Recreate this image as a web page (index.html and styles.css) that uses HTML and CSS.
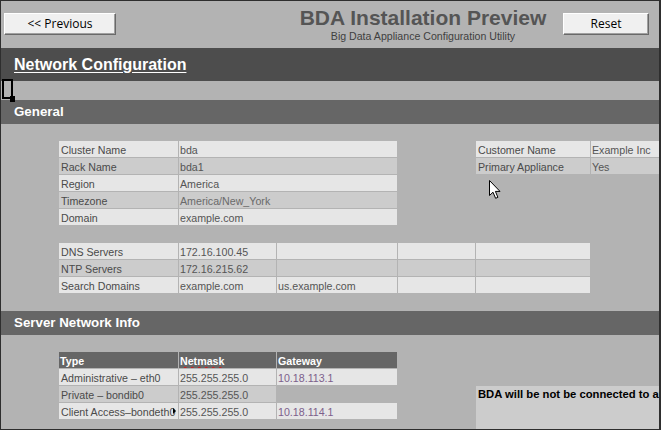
FILE: index.html
```html
<!DOCTYPE html>
<html>
<head>
<meta charset="utf-8">
<title>BDA Installation Preview</title>
<link rel="stylesheet" href="styles.css">
</head>
<body>
<div class="window">
  <header class="topbar">
    <button class="btn prev">&lt;&lt; Previous</button>
    <div class="title-block">
      <div class="title">BDA Installation Preview</div>
      <div class="subtitle">Big Data Appliance Configuration Utility</div>
    </div>
    <button class="btn reset">Reset</button>
  </header>

  <div class="page-band"><span class="page-title">Network Configuration</span></div>
  <div class="blank-row"></div>

  <div class="section-band">General</div>
  <div class="sheet">
    <div class="grid">
      <div class="cell l c1">Cluster Name</div><div class="cell l v c23">bda</div>
      <div class="cell l c5">Customer Name</div><div class="cell l v c6">Example Inc</div>
      <div class="cell d c1">Rack Name</div><div class="cell d v c23">bda1</div>
      <div class="cell d c5">Primary Appliance</div><div class="cell d v c6">Yes</div>
      <div class="cell l c1">Region</div><div class="cell l v c23">America</div>
      <div class="cell d c1">Timezone</div><div class="cell d v2 c23">America/New_York</div>
      <div class="cell l c1">Domain</div><div class="cell l v c23">example.com</div>
    </div>

    <div class="grid dns">
      <div class="cell l c1">DNS Servers</div><div class="cell l v">172.16.100.45</div><div class="cell l"></div><div class="cell l"></div><div class="cell l"></div>
      <div class="cell d c1">NTP Servers</div><div class="cell d v">172.16.215.62</div><div class="cell d"></div><div class="cell d"></div><div class="cell d"></div>
      <div class="cell l c1">Search Domains</div><div class="cell l v">example.com</div><div class="cell l v">us.example.com</div><div class="cell l"></div><div class="cell l"></div>
    </div>
  </div>

  <div class="section-band">Server Network Info</div>
  <div class="sheet">
    <div class="grid">
      <div class="cell h c1">Type</div><div class="cell h"><span class="spell">Netmask</span></div><div class="cell h">Gateway</div>
      <div class="cell l c1">Administrative – eth0</div><div class="cell l v">255.255.255.0</div><div class="cell l gw">10.18.113.1</div>
      <div class="cell d c1">Private – bondib0</div><div class="cell d v">255.255.255.0</div>
      <div class="message">BDA will be not be connected to an existing network</div>
      <div class="cell l c1 marked">Client Access–bondeth0<span class="marker"></span></div><div class="cell l v">255.255.255.0</div><div class="cell l gw">10.18.114.1</div>
    </div>
  </div>

  <svg class="focus" width="14" height="25" viewBox="0 0 14 25">
    <rect x="1" y="1" width="9" height="18" fill="none" stroke="#000" stroke-width="2"/>
    <rect x="8" y="17" width="5" height="6" fill="#000"/>
  </svg>
  <svg class="cursor" width="13" height="20" viewBox="0 0 13 20">
    <path d="M0.5 0.5 L0.5 15.5 L4 12.2 L6.6 18.3 L8.9 17.3 L6.4 11.4 L11 11.4 Z" fill="#fff" stroke="#000" stroke-width="1" stroke-linejoin="miter"/>
  </svg>
</div>
</body>
</html>
```

FILE: styles.css
```css
* { box-sizing: border-box; }
html, body { margin: 0; padding: 0; }
body {
  width: 661px;
  height: 430px;
  overflow: hidden;
  background: #b3b3b3;
  font-family: "Liberation Sans", Arial, sans-serif;
}
.window {
  position: relative;
  width: 661px;
  height: 430px;
  border: 1px solid #2e2e2e;
  border-right-width: 2px;
  overflow: hidden;
  background: #b3b3b3;
  display: flex;
  flex-direction: column;
}
.topbar {
  flex: none;
  height: 47px;
  display: flex;
  align-items: flex-start;
  padding: 0 10px 0 3px;
}
.btn {
  flex: none;
  height: 22px;
  margin: 12px 0 0 0;
  padding: 0;
  background: #f0f0f0;
  border: 1px solid;
  border-color: #ffffff #696969 #696969 #ffffff;
  box-shadow: inset -1px -1px 0 #a0a0a0;
  font: 12px/20px "Open Sans", "Liberation Sans", sans-serif;
  color: #000;
}
.prev { width: 112px; }
.reset { width: 86px; }
.title-block {
  flex: none;
  width: 252px;
  margin: 6px 14px 0 181px;
  text-align: center;
}
.title {
  font: bold 21px/21px "Liberation Sans", Arial, sans-serif;
  color: #555555;
  white-space: nowrap;
}
.subtitle {
  margin-top: 2px;
  font: 10.6px/12px "Liberation Sans", Arial, sans-serif;
  color: #3f3f3f;
  white-space: nowrap;
}
.page-band {
  flex: none;
  height: 33px;
  background: #4d4d4d;
  padding-left: 13px;
  font: bold 16px/33px "Liberation Sans", Arial, sans-serif;
  color: #ffffff;
}
.page-title { text-decoration: underline; text-underline-offset: 2px; }
.blank-row { flex: none; height: 19px; }
.section-band {
  flex: none;
  height: 24px;
  background: #666666;
  padding-left: 13px;
  font: bold 13.33px/24px "Liberation Sans", Arial, sans-serif;
  color: #ffffff;
}
.sheet {
  flex: none;
  padding: 17px 0 18px 58px;
}
.grid {
  display: grid;
  grid-template-columns: 119px 97px 120px 77px 114px 70px;
  grid-auto-rows: 16px;
  gap: 1px;
}
.grid.dns { margin-top: 18px; }
.cell {
  font: 10.67px/14px "Liberation Sans", Arial, sans-serif;
  color: #4a4a4a;
  padding: 2px 0 0 2px;
  white-space: nowrap;
  overflow: hidden;
}
.v { color: #555555; padding-left: 1px; }
.v2 { color: #6a6a6a; padding-left: 1px; }
.l { background: #e6e6e6; }
.d { background: #cccccc; }
.h { background: #666666; color: #ffffff; font-weight: bold; padding-left: 1px; }
.gw { color: #7d5f8c; padding-left: 1px; }
.c1 { grid-column: 1; }
.c23 { grid-column: 2 / span 2; }
.c5 { grid-column: 5; }
.c6 { grid-column: 6; }
.spell {
  text-decoration: underline wavy #e01010;
  text-decoration-thickness: 1px;
  text-underline-offset: 1px;
}
.marked { position: relative; }
.marker {
  position: absolute;
  right: 2px;
  top: 5px;
  width: 0;
  height: 0;
  border-left: 3px solid #000;
  border-top: 3px solid transparent;
  border-bottom: 3px solid transparent;
}
.message {
  grid-column: 5 / span 2;
  grid-row: 3 / span 4;
  background: #cccccc;
  padding-left: 2px;
  font: bold 11.25px/16px "Liberation Sans", Arial, sans-serif;
  color: #000;
  white-space: nowrap;
  overflow: hidden;
}
.focus {
  position: absolute;
  left: 1px;
  top: 78px;
}
.cursor {
  position: absolute;
  left: 488px;
  top: 179px;
}
```
